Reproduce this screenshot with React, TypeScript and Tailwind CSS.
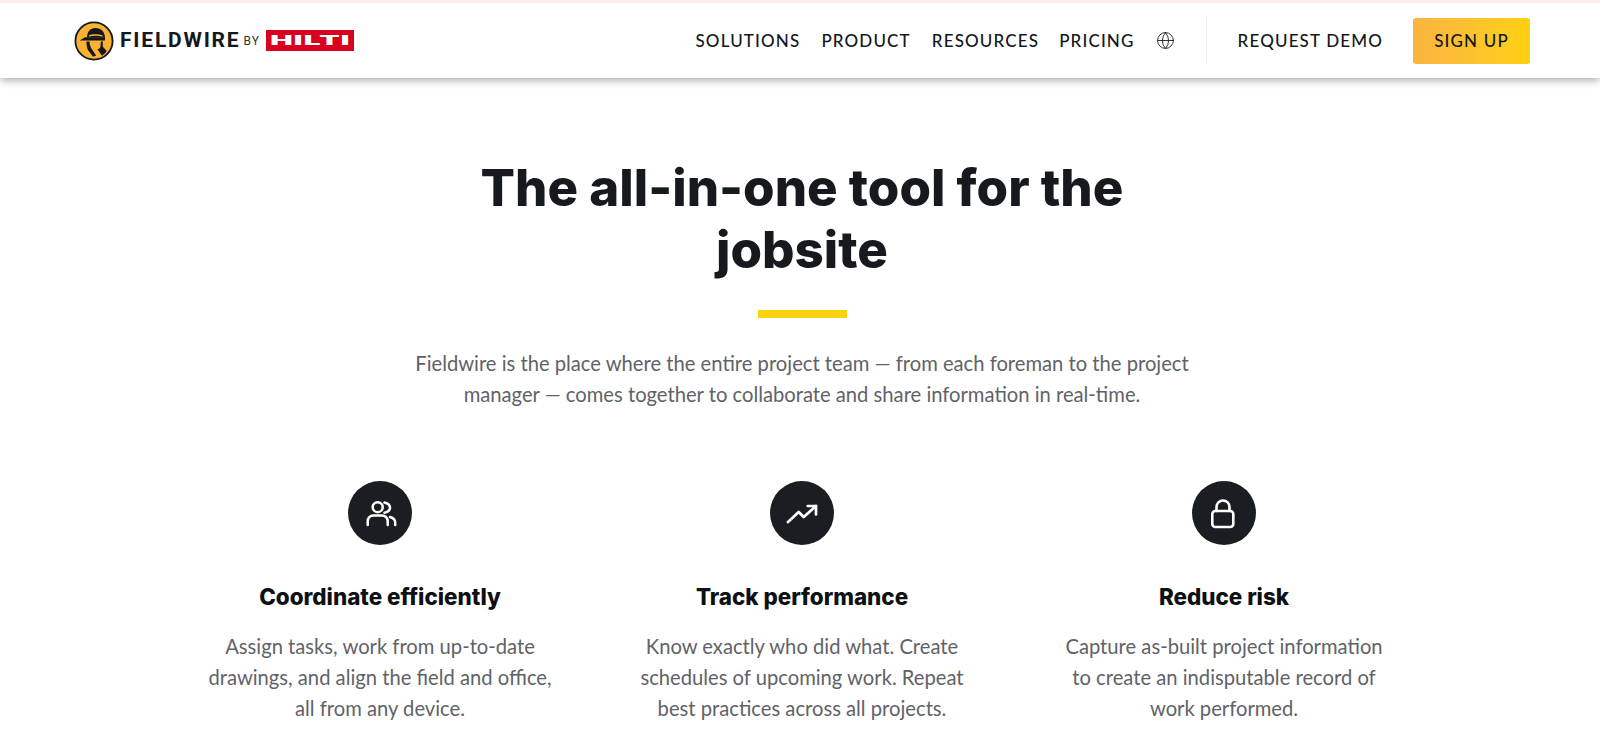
import { Globe } from 'lucide-react'

const features = [
  {
    title: 'Coordinate efficiently',
    lines: ['Assign tasks, work from up-to-date', 'drawings, and align the field and office,', 'all from any device.'],
    icon: 'users',
  },
  {
    title: 'Track performance',
    lines: ['Know exactly who did what. Create', 'schedules of upcoming work. Repeat', 'best practices across all projects.'],
    icon: 'trend',
  },
  {
    title: 'Reduce risk',
    lines: ['Capture as-built project information', 'to create an indisputable record of', 'work performed.'],
    icon: 'lock',
  },
]

function HelmetLogo() {
  return (
    <svg width="40" height="40" viewBox="0 0 40 40" className="shrink-0">
      <circle cx="20" cy="20" r="18.6" fill="#f9b233" stroke="#14181c" strokeWidth="1.8" />
      {/* casco */}
      <path d="M13 16.500c0-5.500 3-9.500 8.500-9.500 5.500 0 9.200 3.800 9.500 9.500z" fill="#14181c" />
      <path d="M15 14.200c3.500-1.400 9-1.400 13.500 0l.3 1.300c-4.500-1.100-9.500-1.100-14 0z" fill="#f9b233" />
      <path d="M5.700 19.600l5.300-3.400h20v3.200z" fill="#14181c" />
      {/* rosto e gola */}
      <path d="M12.500 20.500h3c.2 3 .9 5.500 2.100 7.200l4.500 6.800-3.100 1.200c-2.300-3.400-4.300-5.500-5.300-7-.9-2.600-1.300-5.200-1.200-8.200z" fill="#14181c" />
      <path d="M23 28.500c1.800-.3 3-1.300 3.500-3.100l.4-4.900h2l-.2 5 4 4.500c-1.300 2-2.800 3.500-4.800 4.700l-3-4.500c-.5-.6-1.200-1.200-1.900-1.700z" fill="#14181c" />
    </svg>
  )
}

function FeatureIcon({ name }: { name: string }) {
  if (name === 'users') {
    return (
      <svg width="64" height="64" viewBox="0 0 64 64" fill="none" stroke="white" strokeWidth="2.5" strokeLinecap="round" strokeLinejoin="round">
        <circle cx="29.700" cy="26.200" r="5" />
        <path d="M36.500 21.500c3.400.8 5.500 2.700 5.500 5.200s-2.100 4.200-5.500 5" />
        <path d="M19.700 44v-3.700c0-3.300 2.500-5.800 5.500-5.800h9c3 0 5.500 2.500 5.500 5.800V44" />
        <path d="M42 36c3.200.9 5.200 3 5.200 5.500V44" />
      </svg>
    )
  }
  if (name === 'trend') {
    return (
      <svg width="64" height="64" viewBox="0 0 64 64" fill="none" stroke="white" strokeWidth="2.7" strokeLinecap="round" strokeLinejoin="round">
        <path d="M18 41l10.700-10 5 5L46 25" />
        <path d="M37.700 25H46v8.500" />
      </svg>
    )
  }
  return (
    <svg width="64" height="64" viewBox="0 0 64 64" fill="none" stroke="white" strokeWidth="2.6" strokeLinecap="round" strokeLinejoin="round">
      <rect x="20.300" y="30" width="21" height="16" rx="3" />
      <path d="M24.500 30v-4a6.500 6.500 0 0 1 13 0v4" />
    </svg>
  )
}

export default function App() {
  return (
    <div className="h-[748px] overflow-hidden bg-white font-['Lato',sans-serif]">
      {/* barra de navegacao */}
      <header className="relative z-10 flex h-[78px] items-center justify-between border-t-[3px] border-[#fdecec] bg-white pl-[74px] pr-[70px] shadow-[0_2px_8px_rgba(0,0,0,0.35)]">
        <div className="flex items-center">
          <HelmetLogo />
          <span className="ml-[6px] font-['Roboto',sans-serif] text-[21px] font-bold tracking-[1.8px] text-[#14181c]">FIELDWIRE</span>
          <span className="ml-[3px] font-['Roboto',sans-serif] text-[12px] tracking-[1.2px] text-[#333]">BY</span>
          <div className="ml-[6px] flex h-[21px] w-[88px] items-center justify-center overflow-hidden bg-[#d7001e]">
            <span className="scale-x-[2.3] font-['Inter',sans-serif] text-[13px] leading-none font-black tracking-[0.5px] text-white">HILTI</span>
          </div>
        </div>
        <nav className="flex items-center text-[17px] font-medium tracking-[1.15px] text-[#14181c]">
          <a className="mr-[21px]">SOLUTIONS</a>
          <a className="mr-[21px]">PRODUCT</a>
          <a className="mr-[20px]">RESOURCES</a>
          <a className="mr-[21px]">PRICING</a>
          <Globe size={19} strokeWidth={1.1} className="mr-[31px]" />
          <div className="mr-[31px] h-[46px] w-px bg-[#ececec]" />
          <a className="mr-[30px]">REQUEST DEMO</a>
          <a className="flex h-[46px] w-[117px] items-center justify-center rounded-[3px] bg-gradient-to-r from-[#f9b43f] to-[#ffd00d]">SIGN UP</a>
        </nav>
      </header>

      <main className="flex flex-col items-center pl-[4px]">
        <h1 className="mt-[79px] text-center font-['Inter',sans-serif] text-[51px] leading-[62px] font-extrabold text-[#16191e]">
          The all-in-one tool for the
          <br />
          jobsite
        </h1>
        <div className="mt-[29px] h-2 w-[89px] bg-[#ffd00d]" />
        <p className="mt-[30px] text-center text-[20.2px] leading-[31px] text-[#5f6368]">
          Fieldwire is the place where the entire project team — from each foreman to the project
          <br />
          manager — comes together to collaborate and share information in real-time.
        </p>

        <div className="mt-[71px] grid grid-cols-[422px_422px_422px]">
          {features.map((f) => (
            <div key={f.title} className="flex flex-col items-center">
              <div className="flex h-16 w-16 items-center justify-center rounded-full bg-[#1a1e22]">
                <FeatureIcon name={f.icon} />
              </div>
              <h3 className="mt-[38px] font-['Inter',sans-serif] text-[22.4px] leading-[28px] font-extrabold text-[#0e1114]">{f.title}</h3>
              <p className="mt-[20px] text-center text-[20.2px] leading-[31px] text-[#5f6368]">
                {f.lines.map((l) => (
                  <span key={l} className="block">{l}</span>
                ))}
              </p>
            </div>
          ))}
        </div>
      </main>
    </div>
  )
}
